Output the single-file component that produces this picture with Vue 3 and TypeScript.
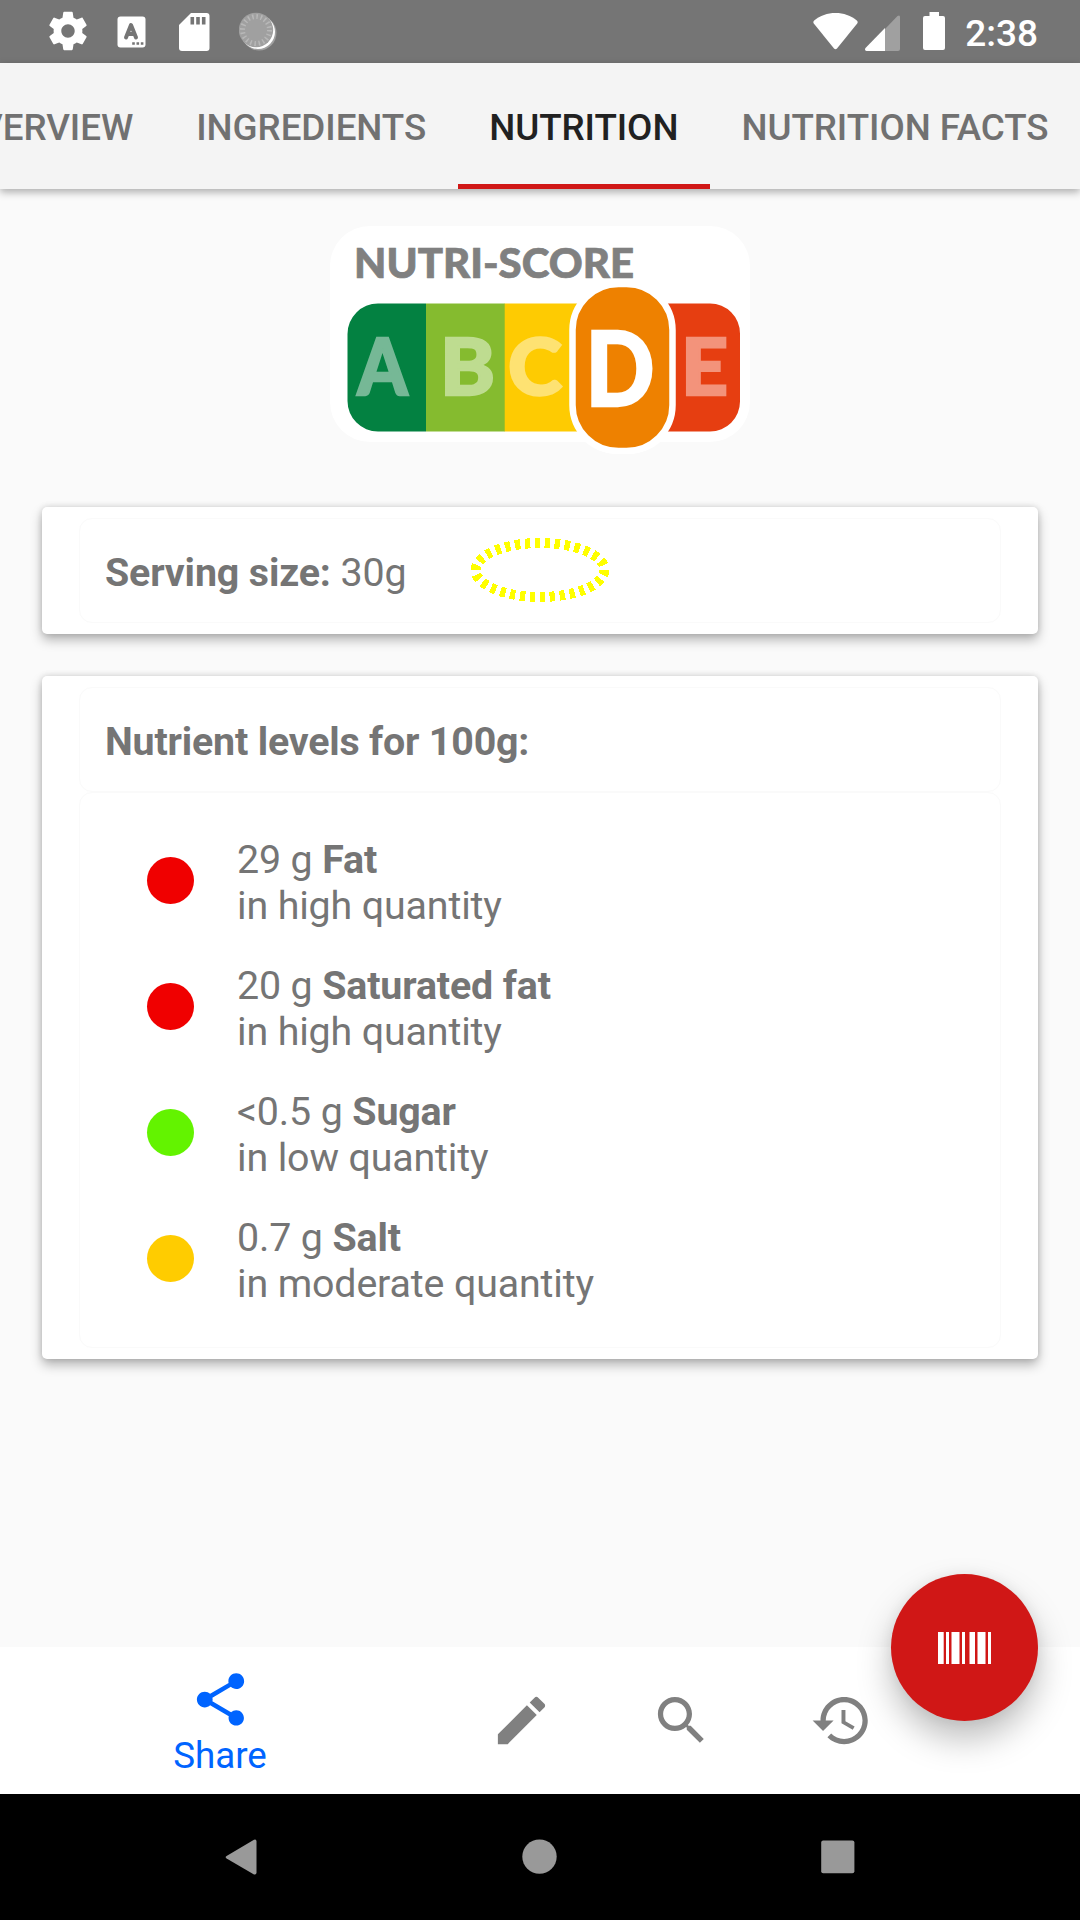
<script setup lang="ts">
interface Nutrient {
  amount: string
  name: string
  level: string
  color: string
}

const tabs: string[] = ['OVERVIEW', 'INGREDIENTS', 'NUTRITION', 'NUTRITION FACTS']
const activeTab = 'NUTRITION'

const nutrients: Nutrient[] = [
  { amount: '29 g', name: 'Fat', level: 'in high quantity', color: '#f00000' },
  { amount: '20 g', name: 'Saturated fat', level: 'in high quantity', color: '#f00000' },
  { amount: '<0.5 g', name: 'Sugar', level: 'in low quantity', color: '#63f300' },
  { amount: '0.7 g', name: 'Salt', level: 'in moderate quantity', color: '#ffcc00' },
]
</script>

<template>
  <div class="screen">
    <header class="status">
      <div class="notifications">
        <svg class="gear" width="46" height="46" viewBox="0 0 24 24">
          <path fill="#fff" d="M19.43 12.98c.04-.32.07-.64.07-.98s-.03-.66-.07-.98l2.11-1.65c.19-.15.24-.42.12-.64l-2-3.46c-.12-.22-.39-.3-.61-.22l-2.49 1c-.52-.4-1.08-.73-1.69-.98l-.38-2.65C14.46 2.18 14.25 2 14 2h-4c-.25 0-.46.18-.49.42l-.38 2.65c-.61.25-1.17.59-1.69.98l-2.49-1c-.23-.09-.49 0-.61.22l-2 3.46c-.13.22-.07.49.12.64l2.11 1.65c-.04.32-.07.65-.07.98s.03.66.07.98l-2.11 1.65c-.19.15-.24.42-.12.64l2 3.46c.12.22.39.3.61.22l2.49-1c.52.4 1.08.73 1.69.98l.38 2.65c.03.24.24.42.49.42h4c.25 0 .46-.18.49-.42l.38-2.65c.61-.25 1.17-.59 1.69-.98l2.49 1c.23.09.49 0 .61-.22l2-3.46c.12-.22.07-.49-.12-.64l-2.11-1.65zM12 15.5c-1.93 0-3.5-1.57-3.5-3.5s1.57-3.5 3.5-3.5 3.5 1.57 3.5 3.5-1.57 3.5-3.5 3.5z" />
        </svg>
        <svg class="keyboard" width="30" height="32" viewBox="0 0 30 32">
          <rect x="0.500" y="0.500" width="28" height="31" rx="3" fill="#fff" />
          <path d="M9 21.500 L14 9 L19 21.500 M10.500 18 H17.500" fill="none" stroke="#757575" stroke-width="4" stroke-linecap="round" stroke-linejoin="round" />
          <path d="M15.200 26.200h2.600v2.600h-2.600zM19.500 26.200h2.600v2.600h-2.600zM23.800 26.200h2.600v2.600h-2.600z" fill="#757575" />
        </svg>
        <svg class="sd" width="31" height="38" viewBox="0 0 31 38">
          <path fill="#fff" d="M12 0H27.500A3 3 0 0 1 30.500 3V35A3 3 0 0 1 27.500 38H3A3 3 0 0 1 0 35V12Z" />
          <path fill="#757575" d="M11.500 4h3.600v7.500h-3.600zM17.200 4h3.600v7.500h-3.600zM22.900 4h3.600v7.500h-3.600z" />
        </svg>
        <svg class="spinner" width="38" height="39" viewBox="0 0 38 39">
          <circle cx="20" cy="21" r="17.500" fill="#a0a0a0" />
          <circle cx="19" cy="20" r="17" fill="#fff" />
          <circle cx="17" cy="18" r="17.200" fill="#a0a0a0" />
          <circle cx="17" cy="18" r="13.500" fill="none" stroke="#b8b8b8" stroke-width="5" stroke-dasharray="1.500 2.740" />
        </svg>
      </div>
      <div class="system">
        <svg class="wifi" width="45" height="37" viewBox="0 0 45 37">
          <path fill="#fff" d="M0.800 10.500Q-0.300 9 1.200 7.600C7 2.500 14.500 0 22.500 0S38 2.500 43.800 7.600Q45.300 9 44.200 10.500L24 35.500Q22.500 37 21 35.500Z" />
        </svg>
        <svg class="signal" width="35" height="36" viewBox="0 0 35 36">
          <path fill="#a0a0a0" d="M20 14 32.500 1Q35 -0.500 35 2V34Q35 36 33 36H20Z" />
          <path fill="#fff" d="M20 13V36H1.500Q-0.800 35.500 0.500 33Z" />
        </svg>
        <svg class="battery" width="22" height="38" viewBox="0 0 22 38">
          <path fill="#fff" d="M6.500 0H16V4H20Q22 4 22 6V36Q22 38 20 38H2Q0 38 0 36V6Q0 4 2 4H6.500Z" />
        </svg>
        <span class="clock">2:38</span>
      </div>
    </header>

    <nav class="tabs">
      <div v-for="tab in tabs" :key="tab" class="tab" :class="{ active: tab === activeTab }">{{ tab }}</div>
    </nav>

    <main class="content">
      <svg class="score" width="420" height="228" viewBox="330 226 420 228">
        <rect x="330" y="226" width="420" height="216" rx="40" fill="#fff" />
        <rect x="569" y="281" width="107.500" height="173" rx="48" fill="#fff" />
        <text x="354" y="277.700" font-size="41" fill="#808080" stroke="#808080" stroke-width="0.700" textLength="280" lengthAdjust="spacingAndGlyphs">NUTRI-SCORE</text>
        <path fill="#038141" d="M426 303.500H378A30.500 30.500 0 0 0 347.500 334V401A30.500 30.500 0 0 0 378 431.500H426Z" />
        <rect x="426" y="303.500" width="79" height="128" fill="#85bb2f" />
        <rect x="504.700" y="303.500" width="90" height="128" fill="#fecb02" />
        <path fill="#e63e11" d="M650 303.500H710A30 30 0 0 1 740 333.500V401.500A30 30 0 0 1 710 431.500H650Z" />
        <rect x="572.500" y="284" width="100" height="167" rx="46" fill="#ee8100" stroke="#fff" stroke-width="6.500" />
        <g font-size="78" stroke-width="2.400">
          <text x="357.500" y="394.800" fill="#76b896" stroke="#76b896" textLength="50" lengthAdjust="spacingAndGlyphs">A</text>
          <text x="440" y="394.800" fill="#bedc90" stroke="#bedc90" textLength="55" lengthAdjust="spacingAndGlyphs">B</text>
          <text x="508" y="394.800" fill="#fee272" stroke="#fee272" textLength="54" lengthAdjust="spacingAndGlyphs">C</text>
          <text x="681" y="394.800" fill="#f3937b" stroke="#f3937b" textLength="47" lengthAdjust="spacingAndGlyphs">E</text>
          <text x="585.500" y="405.500" font-size="102" fill="#fff" stroke="#fff" textLength="69" lengthAdjust="spacingAndGlyphs">D</text>
        </g>
      </svg>

      <section class="card serving">
        <div class="panel heading">
          <p><b>Serving size:</b> 30g</p>
        </div>
        <svg class="marker" width="142" height="68" viewBox="-71 -34 142 68">
          <ellipse rx="64.500" ry="27" fill="none" stroke="#ff0" stroke-width="10" stroke-dasharray="5.300 4.660" shape-rendering="crispEdges" />
        </svg>
      </section>

      <section class="card levels">
        <div class="panel heading">
          <p><b>Nutrient levels for 100g:</b></p>
        </div>
        <div class="panel list">
          <div v-for="item in nutrients" :key="item.name" class="nutrient">
            <i class="dot" :style="{ background: item.color }"></i>
            <p>{{ item.amount }} <b>{{ item.name }}</b><br />{{ item.level }}</p>
          </div>
        </div>
      </section>
    </main>

    <footer class="actions">
      <div class="share">
        <svg width="63" height="63" viewBox="0 0 24 24">
          <path fill="#0064ff" d="M18 16.080c-.76 0-1.440.3-1.960.77L8.910 12.700c.05-.23.09-.46.09-.7s-.04-.47-.09-.7l7.050-4.110c.54.5 1.250.81 2.040.81 1.660 0 3-1.340 3-3s-1.340-3-3-3-3 1.340-3 3c0 .24.04.47.09.7L8.040 9.810C7.500 9.310 6.790 9 6 9c-1.660 0-3 1.340-3 3s1.340 3 3 3c.79 0 1.500-.31 2.040-.81l7.120 4.160c-.05.21-.08.43-.08.65 0 1.610 1.310 2.920 2.920 2.920s2.920-1.310 2.920-2.920-1.310-2.920-2.920-2.920z" />
        </svg>
        <span>Share</span>
      </div>
      <svg class="edit" width="63" height="63" viewBox="0 0 24 24">
        <path fill="#808080" d="M3 17.250V21h3.750L17.810 9.940l-3.750-3.750L3 17.250zM20.710 7.040c.39-.39.39-1.020 0-1.410l-2.340-2.340c-.39-.39-1.020-.39-1.410 0l-1.830 1.830 3.750 3.750 1.830-1.830z" />
      </svg>
      <svg class="search" width="63" height="63" viewBox="0 0 24 24">
        <path fill="#808080" d="M15.500 14h-.79l-.28-.27C15.410 12.590 16 11.110 16 9.500 16 5.910 13.090 3 9.500 3S3 5.910 3 9.500 5.910 16 9.500 16c1.610 0 3.090-.59 4.230-1.570l.27.28v.79l5 4.990L20.490 19l-4.990-5zm-6 0C7.010 14 5 11.990 5 9.500S7.010 5 9.500 5 14 7.010 14 9.500 11.990 14 9.500 14z" />
      </svg>
      <svg class="history" width="63" height="63" viewBox="0 0 24 24">
        <path fill="#808080" d="M13 3c-4.970 0-9 4.030-9 9H1l3.890 3.890.07.14L9 12H6c0-3.870 3.130-7 7-7s7 3.130 7 7-3.130 7-7 7c-1.930 0-3.680-.79-4.940-2.060l-1.420 1.420C8.270 19.990 10.510 21 13 21c4.970 0 9-4.030 9-9s-4.030-9-9-9zm-1 5v5l4.280 2.540.72-1.210-3.500-2.080V8H12z" />
      </svg>
      <div class="fab">
        <svg width="53" height="32" viewBox="0 0 53 32">
          <path fill="#fff" d="M0 0h5.700v32H0zM8 0h3v32H8zM13.500 0h8v32h-8zM24 0h3v32h-3zM31.500 0h5.500v32h-5.500zM39.500 0h8v32h-8zM50 0h3v32h-3z" />
        </svg>
      </div>
    </footer>

    <div class="keys">
      <svg width="36" height="37" viewBox="0 0 36 37">
        <path fill="#999" d="M3.600 17 31 0.800Q33.500 0 33.500 2.500V33.500Q33.500 36 31 35.400L3.600 19.400Q1.700 18.200 3.600 17Z" />
      </svg>
      <svg width="36" height="37" viewBox="0 0 36 37">
        <circle cx="17.500" cy="17.600" r="17.200" fill="#999" />
      </svg>
      <svg width="36" height="37" viewBox="0 0 36 37">
        <rect x="1.200" y="1.400" width="33.200" height="32.800" rx="2" fill="#999" />
      </svg>
    </div>
  </div>
</template>

<style>
body {
  margin: 0;
  overflow: hidden;
}
</style>

<style scoped>
.screen {
  display: flex;
  flex-direction: column;
  width: 1080px;
  height: 1920px;
  overflow: hidden;
  background: #fafafa;
  color: #757575;
  font-family: Roboto, sans-serif;
  font-size: 39.375px;
}
svg {
  display: block;
  flex: none;
}
p {
  margin: 0;
  line-height: 46px;
  letter-spacing: -0.140px;
}
.status {
  display: flex;
  justify-content: space-between;
  height: 63px;
  flex: none;
  background: #757575;
  color: #fff;
}
.notifications,
.system {
  display: flex;
  align-items: flex-start;
}
.gear {
  margin: 8px 0 0 45px;
}
.keyboard {
  margin: 16px 0 0 25.500px;
}
.sd {
  margin: 12.500px 0 0 32px;
}
.spinner {
  margin: 12px 0 0 29px;
}
.system {
  padding-right: 42px;
}
.wifi {
  margin-top: 13px;
}
.signal {
  margin: 14.500px 0 0 7.500px;
}
.battery {
  margin: 12px 0 0 23px;
}
.clock {
  margin: 12px 0 0 20px;
  font-size: 37px;
  font-weight: 500;
  line-height: 44px;
}
.tabs {
  position: relative;
  display: flex;
  justify-content: flex-end;
  height: 126px;
  flex: none;
  background: #f4f4f4;
  box-shadow: 0 3px 8px rgba(0, 0, 0, 0.32);
  font-size: 36.750px;
  font-weight: 500;
  letter-spacing: -0.050px;
  color: #717171;
}
.tab {
  box-sizing: border-box;
  flex: none;
  padding: 0 31.500px;
  border-bottom: 5px solid transparent;
  line-height: 129px;
  height: 126px;
  white-space: nowrap;
}
.tab.active {
  color: #212121;
  border-bottom-color: #d01716;
}
.content {
  flex: 1;
  padding: 37px 42px 0;
}
.score {
  margin: 0 auto 53px;
  font-family: Lato, sans-serif;
  font-weight: 900;
}
.card {
  position: relative;
  box-sizing: border-box;
  padding: 11px 37px;
  background: #fff;
  border-radius: 5px;
  box-shadow: 0 6px 12px rgba(0, 0, 0, 0.28), 0 0 6px rgba(0, 0, 0, 0.14);
}
.serving {
  height: 127px;
  margin-bottom: 42px;
}
.levels {
  height: 683px;
}
.panel {
  box-sizing: border-box;
  border: 1px solid #fafafa;
  border-radius: 13px;
}
.heading {
  height: 105px;
  padding: 31px 0 0 25px;
}
.levels .heading p {
  letter-spacing: -0.190px;
}
.marker {
  position: absolute;
  left: 427px;
  top: 29px;
}
.list {
  height: 556px;
  padding: 44px 0 0 67px;
}
.nutrient {
  display: flex;
  align-items: flex-start;
  height: 126px;
}
.dot {
  width: 47px;
  height: 47px;
  margin: 20px 43px 0 0;
  border-radius: 50%;
}
.actions {
  position: relative;
  display: flex;
  height: 147px;
  flex: none;
  background: #fff;
}
.share {
  display: flex;
  flex-direction: column;
  align-items: center;
  width: 126px;
  margin: 20.600px 0 0 157px;
  color: #0064ff;
  font-size: 36.750px;
  line-height: 43px;
}
.share span {
  margin-top: 3px;
}
.edit {
  margin: 42px 0 0 207px;
}
.search {
  margin: 42px 0 0 97px;
}
.history {
  margin: 42px 0 0 97px;
}
.fab {
  position: absolute;
  left: 891px;
  top: -73px;
  display: flex;
  align-items: center;
  justify-content: center;
  width: 147px;
  height: 147px;
  border-radius: 50%;
  background: #d01716;
  box-shadow: 0 18px 34px rgba(0, 0, 0, 0.26), 0 0 14px rgba(0, 0, 0, 0.06);
}
.keys {
  display: flex;
  justify-content: space-between;
  height: 81px;
  padding: 45px 224px 0 223px;
  flex: none;
  background: #000;
}
</style>
